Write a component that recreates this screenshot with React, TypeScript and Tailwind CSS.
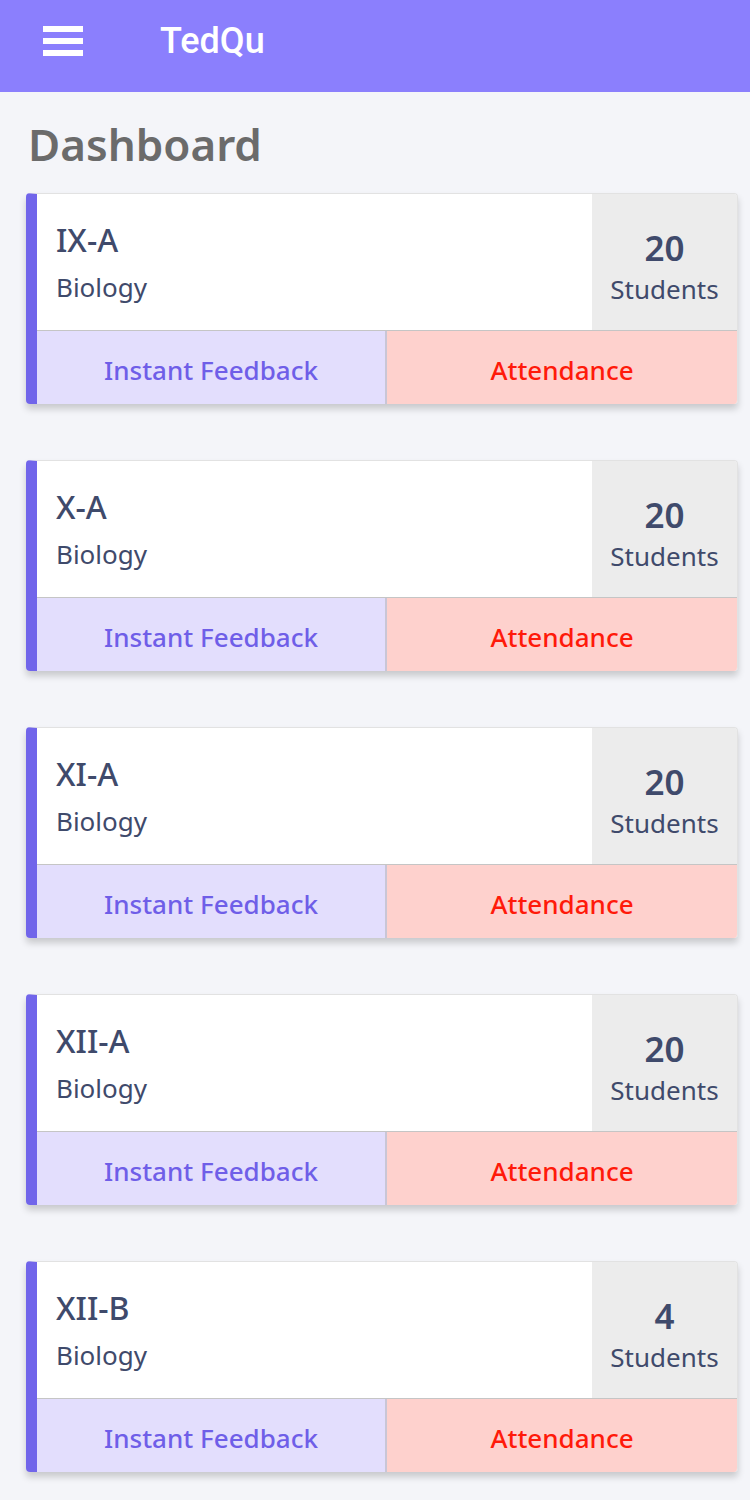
import React from 'react';

interface ClassCard {
    name: string;
    subject: string;
    students: number;
}

const classes: ClassCard[] = [
    { name: 'IX-A', subject: 'Biology', students: 20 },
    { name: 'X-A', subject: 'Biology', students: 20 },
    { name: 'XI-A', subject: 'Biology', students: 20 },
    { name: 'XII-A', subject: 'Biology', students: 20 },
    { name: 'XII-B', subject: 'Biology', students: 4 },
];

const font = { fontFamily: '"Noto Sans", "Open Sans", sans-serif' };

const App = () => {
    return (
        <div className="min-h-screen bg-[#f4f5f9]" style={font}>
            {/* Top bar */}
            <header className="h-[92px] bg-[#8b7ffd] flex items-center pb-[10px]">
                <div className="ml-[43px] w-[40px] flex flex-col gap-[6px]">
                    <span className="block h-[6px] bg-white" />
                    <span className="block h-[6px] bg-white" />
                    <span className="block h-[6px] bg-white" />
                </div>
                <span className="ml-[77px] text-[36px] leading-[40px] font-medium text-white" style={{ fontFamily: 'Roboto, sans-serif' }}>
                    TedQu
                </span>
            </header>

            <main className="pl-[26px] pr-[12px] pb-[28px]">
                <h1 className="pt-[24px] pl-[2px] text-[44px] leading-[56px] font-semibold text-[#6b6b6b]">
                    Dashboard
                </h1>

                <div className="mt-[21px] flex flex-col gap-[56px]">
                    {classes.map((c) => (
                        <div
                            key={c.name}
                            className="rounded-[4px] overflow-hidden border-l-[11px] border-l-[#7165ea] border-t border-r border-[#e2e2e2] shadow-[0_5px_7px_rgba(0,0,0,0.18)]"
                        >
                            <div className="flex h-[137px] border-b border-[#c5c5c5]">
                                <div className="flex-1 bg-white pl-[19px] pt-[26px]">
                                    <div className="text-[32px] leading-[40px] font-medium text-[#3f4a6b]">{c.name}</div>
                                    <div className="mt-[10px] text-[26px] leading-[34px] text-[#3f4a6b]">{c.subject}</div>
                                </div>
                                <div className="w-[145px] bg-[#ececec] flex flex-col items-center pt-[34px]">
                                    <div className="text-[35px] leading-[40px] font-semibold text-[#3f4a6b]">{c.students}</div>
                                    <div className="mt-[5px] text-[26px] leading-[32px] text-[#3f4a6b]">Students</div>
                                </div>
                            </div>
                            <div className="grid grid-cols-2 h-[73px]">
                                <button className="pt-[5px] bg-[#e3defd] border-r-[2px] border-[#c9c6d6] text-[26px] font-medium text-[#6f5ee8]">
                                    Instant Feedback
                                </button>
                                <button className="pt-[5px] bg-[#fed1cd] text-[26px] font-medium text-[#ff1a0a]">
                                    Attendance
                                </button>
                            </div>
                        </div>
                    ))}
                </div>
            </main>
        </div>
    );
};

export default App;
